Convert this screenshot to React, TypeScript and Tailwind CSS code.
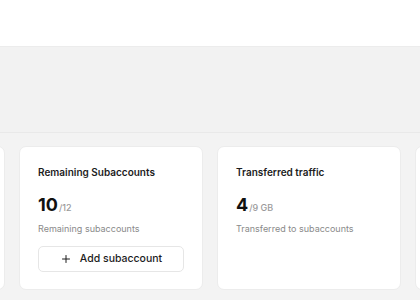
import { Plus } from "lucide-react";

type Stat = {
  title: string;
  value: string;
  total: string;
  note: string;
  action?: string;
};

const stats: Stat[] = [
  { title: "Active Subaccounts", value: "2", total: "/12", note: "Active subaccounts" },
  { title: "Remaining Subaccounts", value: "10", total: "/12", note: "Remaining subaccounts", action: "Add subaccount" },
  { title: "Transferred traffic", value: "4", total: "/9 GB", note: "Transferred to subaccounts" },
  { title: "Remaining traffic", value: "5", total: "/9 GB", note: "Remaining traffic" },
];

function StatCard({ stat }: { stat: Stat }) {
  return (
    <div className="w-[184px] h-[144px] shrink-0 bg-white rounded-[7px] border border-[#ececec] px-[18px] pt-[17px] flex flex-col">
      <div className="text-[10px] leading-[16px] font-semibold text-[#1c1c1c]">{stat.title}</div>
      <div className="mt-[14px] flex items-baseline leading-[22px]">
        <span className="text-[18px] font-bold text-[#111]">{stat.value}</span>
        <span className="text-[9px] font-medium text-[#9a9a9a] ml-[1px]">{stat.total}</span>
      </div>
      <div className="mt-[3px] text-[9px] leading-[14px] text-[#8a8a8a]">{stat.note}</div>
      {stat.action && (
        <button className="mt-[10px] h-[26px] w-full rounded-[5px] border border-[#e6e6e6] bg-white flex items-center justify-center gap-[8px] text-[10.5px] font-medium text-[#1c1c1c]">
          <Plus size={12} strokeWidth={2} />
          {stat.action}
        </button>
      )}
    </div>
  );
}

export default function App() {
  return (
    <div className="w-[420px] h-[300px] overflow-hidden bg-[#f3f3f3] font-['Inter','Liberation_Sans',sans-serif]">
      {/* top bar */}
      <div className="h-[47px] bg-white border-b border-[#ececec]" />

      {/* page header band */}
      <div className="h-[86px] bg-[#f2f2f2] border-b border-[#e9e9e9]" />

      {/* stats row, scrolled so neighbours peek in at the edges */}
      <div className="pt-[13px] flex justify-center gap-[14px]">
        {stats.map((s) => (
          <StatCard key={s.title} stat={s} />
        ))}
      </div>
    </div>
  );
}
